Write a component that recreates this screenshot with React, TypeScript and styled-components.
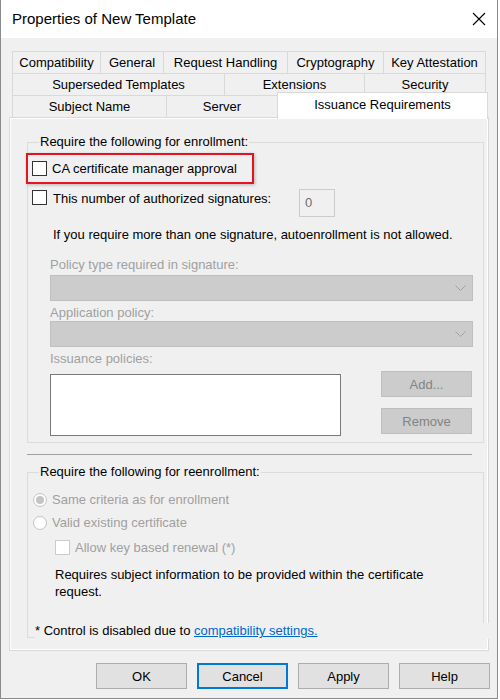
import React from "react";
import styled, { createGlobalStyle, css } from "styled-components";

const GlobalStyle = createGlobalStyle`
  html, body {
    margin: 0;
    padding: 0;
    background: #ffffff;
  }
  body {
    font-family: "Liberation Sans", Arial, sans-serif;
    font-size: 13px;
    color: #000;
  }
`;

const Window = styled.div`
  box-sizing: border-box;
  width: 498px;
  height: 699px;
  background: #f0f0f0;
  border: 1px solid #8a8a8a;
  border-top: none;
  display: flex;
  flex-direction: column;
`;

const TitleBar = styled.div`
  height: 38px;
  background: #ffffff;
  display: flex;
  align-items: center;
  justify-content: space-between;
  padding: 0 10px 0 11px;
`;

const Title = styled.span`
  font-size: 15px;
  line-height: 20px;
`;

const CloseButton = styled.div`
  width: 14px;
  height: 14px;
  display: flex;
  margin-right: 1px;
`;

const Body = styled.div`
  flex: 1;
  display: flex;
  flex-direction: column;
  padding: 13px 7px 9px 0;
`;

const TabStrip = styled.div`
  margin-left: 11px;
  display: flex;
  flex-direction: column;
`;

const TabRow = styled.div`
  display: flex;
  align-items: flex-start;
  & + & {
    margin-top: -1px;
  }
`;

const Tab = styled.div<{ $w: number; $active?: boolean }>`
  box-sizing: border-box;
  flex: 0 0 ${(p) => p.$w}px;
  height: 23px;
  border: 1px solid #d9d9d9;
  background: #f0f0f0;
  display: flex;
  align-items: center;
  justify-content: center;
  line-height: 16px;
  white-space: nowrap;
  & + & {
    margin-left: -1px;
  }
  ${(p) =>
    p.$active &&
    css`
      position: relative;
      z-index: 1;
      height: 27px;
      margin-top: -3px;
      margin-bottom: -3px;
      margin-right: -2px;
      background: #ffffff;
      border-bottom: none;
      padding-bottom: 2px;
    `}
`;

const Panel = styled.div`
  box-sizing: border-box;
  margin: -1px 0 0 8px;
  width: 480px;
  height: 534px;
  border: 1px solid #d9d9d9;
  box-shadow: inset 0 0 0 1px #ffffff;
  padding: 16px 4px 0 17px;
  display: flex;
  flex-direction: column;
`;

const Group = styled.fieldset`
  margin: 0;
  padding: 0 6px 6px 4px;
  border: 1px solid #dcdcdc;
  min-width: 0;
`;

const Legend = styled.legend`
  margin-left: 7px;
  padding: 0 1px;
  line-height: 16px;
`;

const Highlight = styled.div`
  box-sizing: border-box;
  width: 228px;
  height: 31px;
  margin: 3px 0 0 -6px;
  padding-left: 4px;
  border: 2px solid #e8121f;
  box-shadow: 1px 1px 3px rgba(0, 0, 0, 0.25);
  display: flex;
  align-items: center;
`;

const CheckRow = styled.div<{ $indent?: number }>`
  display: flex;
  align-items: flex-start;
  margin-left: ${(p) => p.$indent ?? 0}px;
`;

const Check = styled.span<{ $disabled?: boolean }>`
  box-sizing: border-box;
  flex: 0 0 15px;
  width: 15px;
  height: 15px;
  background: #ffffff;
  border: 1px solid ${(p) => (p.$disabled ? "#cccccc" : "#333333")};
`;

const Label = styled.span<{ $disabled?: boolean; $gap?: number }>`
  margin-left: ${(p) => p.$gap ?? 5}px;
  line-height: 16px;
  white-space: nowrap;
  color: ${(p) => (p.$disabled ? "#a0a0a0" : "#000000")};
`;

const SignatureRow = styled.div`
  display: flex;
  align-items: flex-start;
  margin-top: 5px;
`;

const SignatureLabel = styled.div`
  flex: 0 0 267px;
  display: flex;
  align-items: flex-start;
  padding-top: 1px;
  & > span:last-child {
    margin-top: 1px;
  }
`;

const CountBox = styled.div`
  box-sizing: border-box;
  width: 36px;
  height: 28px;
  border: 1px solid #cccccc;
  background: #f0f0f0;
  color: #6d6d6d;
  padding: 5px 0 0 5px;
  line-height: 16px;
`;

const Note = styled.div`
  margin: 10px 0 0 21px;
  line-height: 16px;
`;

const FieldLabel = styled.div<{ $top: number }>`
  margin: ${(p) => p.$top}px 0 0 18px;
  line-height: 16px;
  color: #a0a0a0;
`;

const Select = styled.div<{ $top: number }>`
  box-sizing: border-box;
  margin: ${(p) => p.$top}px 0 0 18px;
  width: 423px;
  height: 26px;
  background: #cccccc;
  border: 1px solid #bfbfbf;
  display: flex;
  align-items: center;
  justify-content: flex-end;
  padding-right: 6px;
`;

const ListRow = styled.div`
  display: flex;
  align-items: flex-start;
  margin: 4px 0 0 18px;
`;

const ListBox = styled.div`
  box-sizing: border-box;
  width: 291px;
  height: 62px;
  margin-top: 3px;
  background: #ffffff;
  border: 1px solid #7a7a7a;
`;

const SideButtons = styled.div`
  display: flex;
  flex-direction: column;
  gap: 11px;
  margin-left: 40px;
`;

const SideButton = styled.div`
  box-sizing: border-box;
  width: 91px;
  height: 26px;
  background: #cccccc;
  border: 1px solid #bfbfbf;
  color: #838383;
  display: flex;
  align-items: center;
  justify-content: center;
`;

const Separator = styled.div`
  width: 445px;
  height: 1px;
  background: #a0a0a0;
  margin-top: 11px;
`;

const ReGroup = styled(Group)`
  margin-top: 9px;
  padding: 0 0 0 4px;
`;

const RadioRow = styled.div<{ $top?: number }>`
  height: 23px;
  display: flex;
  align-items: center;
  margin-top: ${(p) => p.$top ?? 0}px;
  padding-left: 1px;
`;

const Radio = styled.span<{ $checked?: boolean }>`
  box-sizing: border-box;
  width: 14px;
  height: 14px;
  border-radius: 50%;
  border: 1px solid #c4c4c4;
  background: #ffffff;
  display: flex;
  align-items: center;
  justify-content: center;
  &::after {
    content: "";
    width: 8px;
    height: 8px;
    border-radius: 50%;
    background: ${(p) => (p.$checked ? "#c4c4c4" : "transparent")};
  }
`;

const SubCheckRow = styled.div`
  height: 23px;
  display: flex;
  align-items: center;
  margin: 2px 0 0 23px;
`;

const Description = styled.div`
  width: 380px;
  margin: 8px 0 0 23px;
  line-height: 16.5px;
`;

const Footnote = styled.div`
  position: relative;
  margin: 23px -12px -2px 3px;
  background: #f0f0f0;
  line-height: 16px;
  white-space: nowrap;
`;

const Link = styled.span`
  color: #0066cc;
  text-decoration: underline;
`;

const ButtonBar = styled.div`
  display: flex;
  justify-content: flex-end;
  gap: 10px;
  margin-top: 12px;
`;

const Button = styled.div<{ $default?: boolean }>`
  box-sizing: border-box;
  width: 91px;
  height: 26px;
  background: #e1e1e1;
  border: 1px solid ${(p) => (p.$default ? "#0078d7" : "#adadad")};
  box-shadow: ${(p) => (p.$default ? "inset 0 0 0 1px #0078d7" : "none")};
  display: flex;
  align-items: center;
  justify-content: center;
`;

const Chevron = () => (
  <svg width="11" height="7" viewBox="0 0 11 7">
    <polyline points="0.5,0.5 5.5,5.5 10.5,0.5" fill="none" stroke="#a3a3a3" strokeWidth="1" />
  </svg>
);

const tabRows: { label: string; w: number; active?: boolean }[][] = [
  [
    { label: "Compatibility", w: 89 },
    { label: "General", w: 64 },
    { label: "Request Handling", w: 125 },
    { label: "Cryptography", w: 97 },
    { label: "Key Attestation", w: 103 },
  ],
  [
    { label: "Superseded Templates", w: 213 },
    { label: "Extensions", w: 141 },
    { label: "Security", w: 122 },
  ],
  [
    { label: "Subject Name", w: 155 },
    { label: "Server", w: 112 },
    { label: "Issuance Requirements", w: 211, active: true },
  ],
];

export default function App() {
  return (
    <>
      <GlobalStyle />
      <Window>
        <TitleBar>
          <Title>Properties of New Template</Title>
          <CloseButton>
            <svg width="14" height="14" viewBox="0 0 14 14">
              <path d="M1 1 L13 13 M13 1 L1 13" stroke="#000" strokeWidth="1.1" fill="none" />
            </svg>
          </CloseButton>
        </TitleBar>
        <Body>
          <TabStrip>
            {tabRows.map((row, i) => (
              <TabRow key={i}>
                {row.map((t) => (
                  <Tab key={t.label} $w={t.w} $active={t.active}>
                    {t.label}
                  </Tab>
                ))}
              </TabRow>
            ))}
          </TabStrip>
          <Panel>
            <Group>
              <Legend>Require the following for enrollment:</Legend>
              <Highlight>
                <Check />
                <Label>CA certificate manager approval</Label>
              </Highlight>
              <SignatureRow>
                <SignatureLabel>
                  <Check />
                  <Label $gap={6}>This number of authorized signatures:</Label>
                </SignatureLabel>
                <CountBox>0</CountBox>
              </SignatureRow>
              <Note>If you require more than one signature, autoenrollment is not allowed.</Note>
              <FieldLabel $top={14}>Policy type required in signature:</FieldLabel>
              <Select $top={2}>
                <Chevron />
              </Select>
              <FieldLabel $top={4}>Application policy:</FieldLabel>
              <Select $top={0}>
                <Chevron />
              </Select>
              <FieldLabel $top={4}>Issuance policies:</FieldLabel>
              <ListRow>
                <ListBox />
                <SideButtons>
                  <SideButton>Add...</SideButton>
                  <SideButton>Remove</SideButton>
                </SideButtons>
              </ListRow>
            </Group>
            <Separator />
            <ReGroup>
              <Legend>Require the following for reenrollment:</Legend>
              <RadioRow $top={8}>
                <Radio $checked />
                <Label $disabled>Same criteria as for enrollment</Label>
              </RadioRow>
              <RadioRow>
                <Radio />
                <Label $disabled>Valid existing certificate</Label>
              </RadioRow>
              <SubCheckRow>
                <Check $disabled />
                <Label $disabled>Allow key based renewal (*)</Label>
              </SubCheckRow>
              <Description>
                Requires subject information to be provided within the certificate request.
              </Description>
              <Footnote>
                * Control is disabled due to <Link>compatibility settings.</Link>
              </Footnote>
            </ReGroup>
          </Panel>
          <ButtonBar>
            <Button>OK</Button>
            <Button $default>Cancel</Button>
            <Button>Apply</Button>
            <Button>Help</Button>
          </ButtonBar>
        </Body>
      </Window>
    </>
  );
}
